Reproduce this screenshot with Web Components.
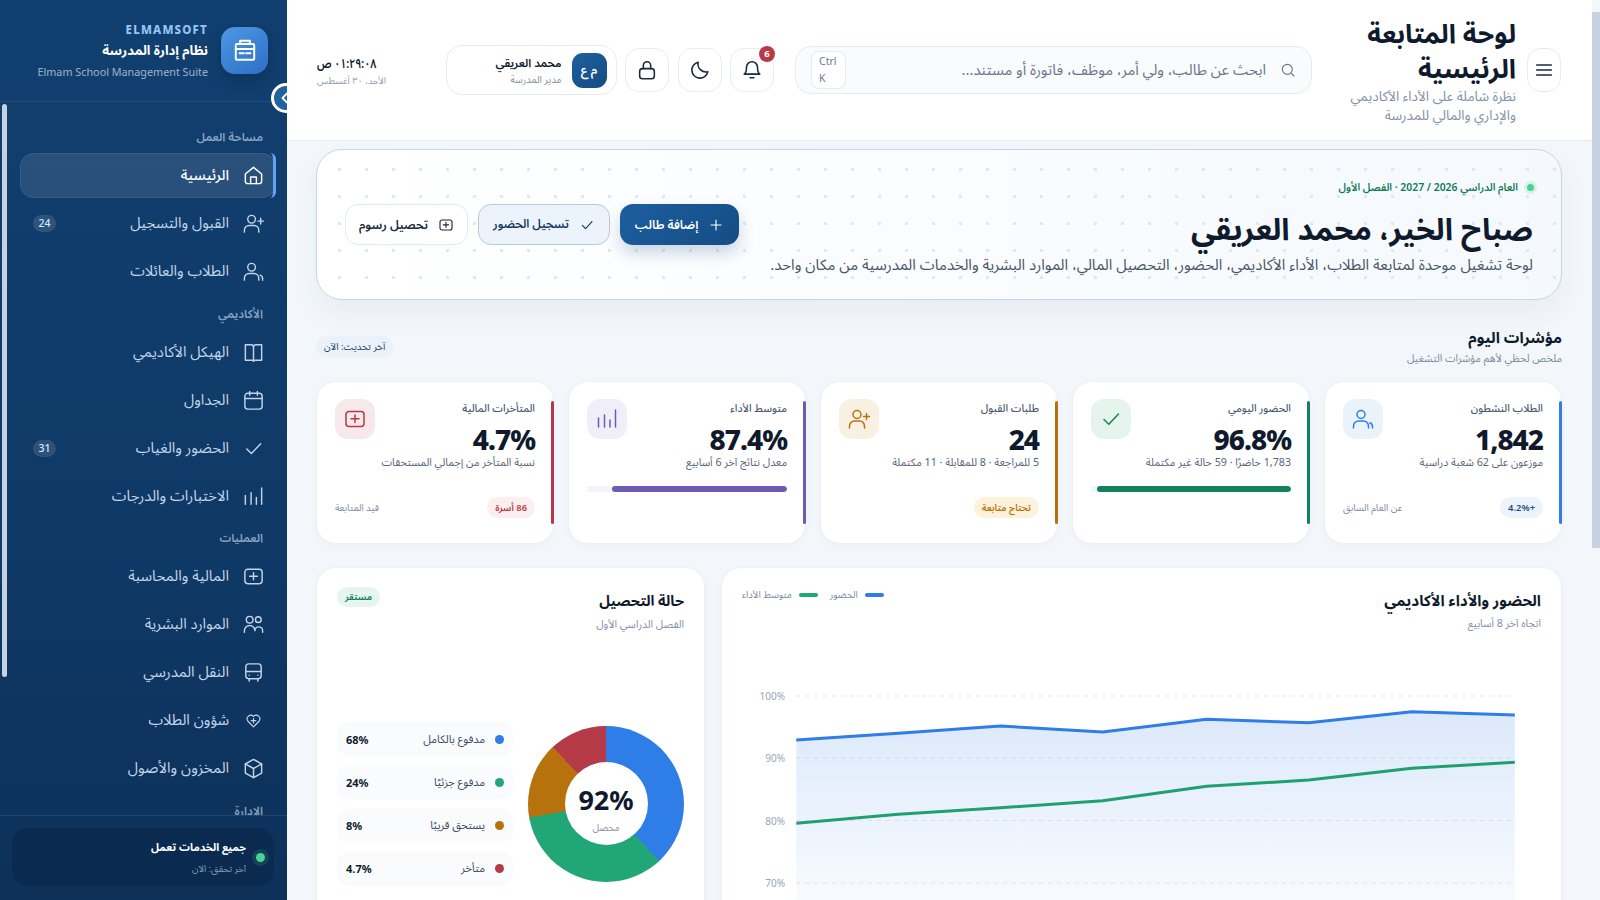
<!DOCTYPE html>
<html lang="ar">
<head>
<meta charset="utf-8">
<title>Elmam School</title>
<style>
  html, body { margin: 0; height: 100%; overflow: hidden; }
  body {
    font-family: "Noto Sans", "Noto Sans Arabic", "DejaVu Sans", sans-serif;
    color: #0f1b2d;
    background: #f3f7fb;
  }
  school-app { height: 900px; }
</style>
</head>
<body>
<school-app>
  <side-bar slot="side">
    <nav-label>مساحة العمل</nav-label>
    <nav-item icon="home" active>الرئيسية</nav-item>
    <nav-item icon="userplus" badge="24">القبول والتسجيل</nav-item>
    <nav-item icon="user">الطلاب والعائلات</nav-item>
    <nav-label>الأكاديمي</nav-label>
    <nav-item icon="book">الهيكل الأكاديمي</nav-item>
    <nav-item icon="calendar">الجداول</nav-item>
    <nav-item icon="check" badge="31">الحضور والغياب</nav-item>
    <nav-item icon="bars">الاختبارات والدرجات</nav-item>
    <nav-label>العمليات</nav-label>
    <nav-item icon="plusbox">المالية والمحاسبة</nav-item>
    <nav-item icon="people">الموارد البشرية</nav-item>
    <nav-item icon="bus">النقل المدرسي</nav-item>
    <nav-item icon="heart">شؤون الطلاب</nav-item>
    <nav-item icon="cube">المخزون والأصول</nav-item>
    <nav-label>الإدارة</nav-label>
  </side-bar>
  <top-bar slot="top"></top-bar>
  <hero-panel></hero-panel>
  <section-head></section-head>
  <kpi-grid>
    <kpi-card color="#2f7de6" tint="#eaf2fc" icon="user" label="الطلاب النشطون" value="1,842" sub="موزعون على 62 شعبة دراسية" badge="+4.2%" tone="blue" note="عن العام السابق"></kpi-card>
    <kpi-card color="#15815c" tint="#e6f4ee" icon="check" label="الحضور اليومي" value="96.8%" sub="1,783 حاضرًا · 59 حالة غير مكتملة" progress="96.8"></kpi-card>
    <kpi-card color="#b8720d" tint="#f8f0e3" icon="userplus" label="طلبات القبول" value="24" sub="5 للمراجعة · 8 للمقابلة · 11 مكتملة" badge="تحتاج متابعة" tone="amber"></kpi-card>
    <kpi-card color="#6b5bb5" tint="#f0eef8" icon="bars" label="متوسط الأداء" value="87.4%" sub="معدل نتائج آخر 6 أسابيع" progress="87.4"></kpi-card>
    <kpi-card color="#b53a47" tint="#f7e9eb" icon="plusbox" label="المتأخرات المالية" value="4.7%" sub="نسبة المتأخر من إجمالي المستحقات" badge="86 أسرة" tone="red" note="قيد المتابعة"></kpi-card>
  </kpi-grid>
  <chart-row>
    <line-chart></line-chart>
    <donut-chart></donut-chart>
  </chart-row>
</school-app>

<script>
const paths = {
  home: '<path d="M3.5 10.5 12 3.5l8.5 7V18a2.5 2.5 0 0 1-2.5 2.5H6A2.5 2.5 0 0 1 3.5 18z"/><path d="M9 20.5v-7h6v7"/>',
  userplus: '<circle cx="10" cy="7.5" r="4"/><path d="M2.5 21v-2a5 5 0 0 1 5-5h5a5 5 0 0 1 5 5v2"/><path d="M19.5 6.5v6M16.5 9.5h6"/>',
  user: '<circle cx="10" cy="7.5" r="4"/><path d="M2.5 21v-2a5 5 0 0 1 5-5h5a5 5 0 0 1 5 5v2"/><path d="M21.5 21v-1.5a4 4 0 0 0-2.5-3.7"/>',
  book: '<path d="M3.5 4h6A2.5 2.5 0 0 1 12 6a2.5 2.5 0 0 1 2.5-2h6v16H14a2 2 0 0 0-2 1 2 2 0 0 0-2-1H3.5z"/><path d="M12 6v15"/>',
  calendar: '<rect x="3" y="4.5" width="18" height="16.5" rx="3"/><path d="M3 10h18M8 2.5v4M16 2.5v4"/>',
  check: '<path d="M5 12.5l4.8 4.8L19.5 7"/>',
  bars: '<path d="M3.5 11v9M9.5 8v12M15 13v7M20.5 3v17"/>',
  plusbox: '<rect x="3" y="4.5" width="18" height="15" rx="3"/><path d="M12 8v7.5M8 11.8h8"/>',
  people: '<circle cx="8" cy="7" r="3.5"/><circle cx="17" cy="7" r="3"/><path d="M2.5 20v-1.5a5.5 5.5 0 0 1 11 0c0-2.5 1.5-4 4-4s4 1.5 4 4V20"/>',
  bus: '<rect x="4" y="3" width="16" height="15.5" rx="3"/><path d="M4 11h16M7.5 18.500V21M16.500 18.500V21M7.500 14.800h.01M16.500 14.800h.01"/>',
  heart: '<g transform="translate(2.4 2.2) scale(.8)"><path d="M12 20.5 4.800 13.200a4.800 4.800 0 0 1 6.700-6.800l.5.500.5-.5a4.800 4.800 0 0 1 6.700 6.800z"/><path d="M12 9.5v6M9 12.500h6"/></g>',
  cube: '<path d="M12 2.500 20.500 7.300v9.400L12 21.500l-8.500-4.800V7.300z"/><path d="M3.500 7.300 12 12l8.500-4.700M12 12v9.500"/>',
  logo: '<rect x="3.5" y="6.5" width="17" height="14.5" rx="1"/><path d="M7.500 6.500v-3h9v3M3.500 11h17M7 15h4M13 15h4"/>',
  bell: '<path d="M6 9a6 6 0 0 1 12 0c0 6 2.500 7.500 2.500 7.500h-17S6 15 6 9z"/><path d="M10 20.500h4"/>',
  moon: '<path d="M20.500 14A8.800 8.800 0 0 1 10 3.500 8.800 8.800 0 1 0 20.500 14z"/>',
  lock: '<rect x="4" y="10.5" width="16" height="11" rx="3"/><path d="M8 10.500V7a4 4 0 0 1 8 0v3.500"/>',
  menu: '<path d="M4 6.500h16M4 12h16M4 17.500h16"/>',
  search: '<circle cx="11" cy="11" r="7.5"/><path d="M17 17l4 4"/>',
  plus: '<path d="M12 4.500v15M4.500 12h15"/>'
};

class UiIcon extends HTMLElement {
  connectedCallback() {
    const size = this.getAttribute("size") || 20;
    const weight = this.getAttribute("weight") || 1.7;
    this.attachShadow({mode: "open"}).innerHTML = `
      <style>:host { display: inline-flex; flex: none; width: ${size}px; height: ${size}px; } svg { width: 100%; height: 100%; }</style>
      <svg viewBox="0 0 24 24" fill="none" stroke="currentColor" stroke-width="${weight}" stroke-linecap="round" stroke-linejoin="round">${paths[this.getAttribute("name")]}</svg>`;
  }
}
customElements.define("ui-icon", UiIcon);

const appTemplate = document.createElement("template");
appTemplate.innerHTML = `
  <style>
    :host { display: flex; direction: ltr; width: 1600px; overflow: hidden; }
    .main { flex: 1; min-width: 0; direction: rtl; display: flex; flex-direction: column; height: 900px; overflow: hidden; }
    .content { padding: 8px 30px 0 29px; }
    .rail { flex: none; width: 8px; background: #f3f6fa; padding-top: 12px; box-sizing: border-box; }
    .rail div { height: 536px; background: #c6d2e2; }
  </style>
  <slot name="side"></slot>
  <div class="main">
    <slot name="top"></slot>
    <div class="content"><slot></slot></div>
  </div>
  <div class="rail"><div></div></div>
`;
class SchoolApp extends HTMLElement {
  constructor() {
    super();
    this.attachShadow({mode: "open"}).appendChild(appTemplate.content.cloneNode(true));
  }
}
customElements.define("school-app", SchoolApp);

const sideTemplate = document.createElement("template");
sideTemplate.innerHTML = `
  <style>
    :host { display: flex; flex-direction: column; flex: none; width: 287px; height: 900px; position: relative; overflow: hidden; direction: rtl;
      background: linear-gradient(180deg, #113f6f 0%, #0f3a68 55%, #0d3159 100%); color: #fff; }
    .head { height: 102px; flex: none; box-sizing: border-box; display: flex; align-items: center; gap: 13px; padding: 0 19px 0 0; border-bottom: 1px solid rgba(255,255,255,.07); }
    .logo { width: 47px; height: 47px; margin-top: -1px; border-radius: 14px; background: linear-gradient(145deg, #4f97e6, #2c70c4); display: flex; align-items: center; justify-content: center; color: #fff; box-shadow: 0 6px 14px rgba(6,25,55,.3); }
    .brand { display: flex; flex-direction: column; padding-top: 2px; }
    .en { font-size: 11.5px; font-weight: 800; letter-spacing: 1.2px; color: #93c5f5; line-height: 17px; }
    .name { font-size: 13.2px; font-weight: 700; line-height: 24px; }
    .suite { font-size: 10.8px; color: rgba(225,235,247,.68); line-height: 20px; direction: ltr; text-align: right; }
    .toggle { position: absolute; left: 271px; top: 83px; width: 30px; height: 30px; box-sizing: border-box; border-radius: 50%; border: 3px solid #fff; background: #20639f; color: #fff; display: flex; align-items: center; direction: ltr; padding-left: 6px; z-index: 2; }
    .nav { flex: 1; min-height: 0; overflow: hidden; padding: 15.5px 11px 0 20px; }
    .thumb { position: absolute; left: 2px; top: 104px; width: 5px; height: 573px; border-radius: 3px; background: #c6d2e2; }
    .foot { flex: none; height: 85px; box-sizing: border-box; border-top: 1px solid rgba(255,255,255,.09); padding: 12px 13px 0 12px; }
    .status { height: 58px; border-radius: 16px; background: rgba(7,28,58,.32); display: flex; align-items: center; gap: 10px; padding-right: 7px; }
    .dot { width: 9px; height: 9px; border-radius: 50%; background: #4ad195; box-shadow: 0 0 0 4px rgba(74,209,149,.14); margin-right: 2px; }
    .t { font-size: 10.8px; font-weight: 700; line-height: 22px; }
    .s { font-size: 9.4px; color: rgba(215,226,240,.6); line-height: 21px; }
  </style>
  <div class="head">
    <div class="logo"><ui-icon name="logo" size="26" weight="1.8"></ui-icon></div>
    <div class="brand">
      <span class="en" dir="ltr" style="text-align:right">ELMAMSOFT</span>
      <span class="name">نظام إدارة المدرسة</span>
      <span class="suite">Elmam School Management Suite</span>
    </div>
  </div>
  <div class="toggle"><svg width="10" height="12" viewBox="0 0 10 12" fill="none" stroke="#fff" stroke-width="1.8" stroke-linecap="round" stroke-linejoin="round"><path d="M7 1.5 2.5 6 7 10.5"/></svg></div>
  <div class="thumb"></div>
  <div class="nav"><slot></slot></div>
  <div class="foot">
    <div class="status">
      <span class="dot"></span>
      <div><div class="t">جميع الخدمات تعمل</div><div class="s">آخر تحقق: الآن</div></div>
    </div>
  </div>
`;
class SideBar extends HTMLElement {
  constructor() {
    super();
    this.attachShadow({mode: "open"}).appendChild(sideTemplate.content.cloneNode(true));
  }
}
customElements.define("side-bar", SideBar);

class NavLabel extends HTMLElement {
  constructor() {
    super();
    this.attachShadow({mode: "open"}).innerHTML = `
      <style>:host { display: block; height: 16px; line-height: 16px; margin: 10.5px 0 9px; padding-right: 13px; font-size: 11.7px; font-weight: 600; color: rgba(195,213,235,.68); }</style>
      <slot></slot>`;
  }
}
customElements.define("nav-label", NavLabel);

class NavItem extends HTMLElement {
  constructor() {
    super();
    const badge = this.getAttribute("badge");
    this.attachShadow({mode: "open"}).innerHTML = `
      <style>
        :host { display: flex; align-items: center; gap: 12.5px; height: 45px; box-sizing: border-box; margin-bottom: 3px; padding: 0 11.5px 0 13px; border-radius: 14px; font-size: 14.8px; color: #c3d4e8; position: relative; }
        :host([active]) { background: rgba(255,255,255,.1); box-shadow: inset 0 0 0 1px rgba(255,255,255,.07); color: #fff; font-size: 14.4px; font-weight: 500; }
        :host([active])::after { content: ""; position: absolute; right: 0; top: 0; bottom: 0; width: 12px; border-right: 3px solid #62a5ee; border-radius: 14px; box-sizing: border-box; }
        .badge { margin-right: auto; min-width: 23px; height: 17px; line-height: 17px; border-radius: 9px; background: rgba(255,255,255,.12); font-size: 10.5px; text-align: center; color: #dbe7f4; font-weight: 500; }
      </style>
      <ui-icon name="${this.getAttribute("icon")}" size="23" weight="1.5"></ui-icon>
      <span><slot></slot></span>
      ${badge ? `<span class="badge">${badge}</span>` : ""}`;
  }
}
customElements.define("nav-item", NavItem);

class IconButton extends HTMLElement {
  constructor() {
    super();
    const badge = this.getAttribute("badge");
    this.attachShadow({mode: "open"}).innerHTML = `
      <style>
        :host { display: flex; align-items: center; justify-content: center; flex: none; width: 44px; height: 44px; box-sizing: border-box; background: #fff; border: 1px solid #e7ecf3; border-radius: 14px; color: #1a2a3f; position: relative; }
        .badge { position: absolute; top: -3px; left: 28px; width: 16px; height: 16px; border-radius: 50%; background: #b83a45; color: #fff; font-size: 9.5px; font-weight: 700; line-height: 16px; text-align: center; }
      </style>
      <ui-icon name="${this.getAttribute("icon")}" size="22" weight="1.7"></ui-icon>
      ${badge ? `<span class="badge">${badge}</span>` : ""}`;
  }
}
customElements.define("icon-button", IconButton);

const topTemplate = document.createElement("template");
topTemplate.innerHTML = `
  <style>
    :host { display: flex; align-items: center; flex: none; height: 141px; box-sizing: border-box; padding: 0 31px 0 30px; background: #fff; border-bottom: 1px solid #e6ecf3; }
    .menu { width: 34px; margin-left: 11px; }
    .titles { flex: none; width: 166px; margin-left: 38px; }
    h1 { margin: 0; font-size: 26.5px; line-height: 35px; font-weight: 700; color: #0f1b2d; }
    p { margin: 1px 0 0; font-size: 13.5px; line-height: 19px; color: #8391a5; margin-left: -6px; }
    .search { flex: none; width: 517px; height: 48px; box-sizing: border-box; display: flex; align-items: center; gap: 14px; padding: 0 15px; margin-left: 21px; background: #f9fbfd; border: 1px solid #e6ebf2; border-radius: 16px; color: #68778b; font-size: 14.8px; }
    .search span:nth-of-type(1) { white-space: nowrap; }
    .kbd { margin-right: auto; width: 35px; height: 38px; box-sizing: border-box; padding: 1px 7px; background: #fff; border: 1px solid #e6ebf2; border-radius: 8px; font-size: 10.5px; line-height: 17px; color: #6b7a8e; direction: ltr; text-align: left; }
    .acts { display: flex; gap: 8.5px; align-items: center; }
    .chip { width: 171px; height: 50px; box-sizing: border-box; display: flex; align-items: center; gap: 10px; padding: 0 9px; background: #fff; border: 1px solid #e7ecf3; border-radius: 16px; }
    .ava { width: 35px; height: 35px; border-radius: 11px; background: linear-gradient(145deg, #1d5f9d, #154c84); color: #fff; display: flex; align-items: center; justify-content: center; font-size: 12.5px; font-weight: 600; letter-spacing: 1px; flex: none; }
    .nm { font-size: 11.5px; font-weight: 600; line-height: 18px; }
    .rl { font-size: 9.8px; color: #8391a5; line-height: 15px; }
    .clock { margin-right: auto; text-align: left; }
    .tm { font-size: 13px; font-weight: 600; line-height: 20px; transform: scaleX(.81); transform-origin: left center; }
    .dt { font-size: 9.2px; color: #8f9cae; line-height: 15px; }
  </style>
  <icon-button class="menu" icon="menu"></icon-button>
  <div class="titles">
    <h1>لوحة المتابعة الرئيسية</h1>
    <p>نظرة شاملة على الأداء الأكاديمي والإداري والمالي للمدرسة</p>
  </div>
  <div class="search">
    <ui-icon name="search" size="16"></ui-icon>
    <span>ابحث عن طالب، ولي أمر، موظف، فاتورة أو مستند...</span>
    <span class="kbd">Ctrl K</span>
  </div>
  <div class="acts">
    <icon-button icon="bell" badge="6"></icon-button>
    <icon-button icon="moon"></icon-button>
    <icon-button icon="lock"></icon-button>
    <div class="chip">
      <span class="ava">م ع</span>
      <div><div class="nm">محمد العريقي</div><div class="rl">مدير المدرسة</div></div>
    </div>
  </div>
  <div class="clock">
    <div class="tm">٠١:٢٩:٠٨ ص</div>
    <div class="dt">الأحد، ٣٠ أغسطس</div>
  </div>
`;
class TopBar extends HTMLElement {
  constructor() {
    super();
    this.attachShadow({mode: "open"}).appendChild(topTemplate.content.cloneNode(true));
  }
}
customElements.define("top-bar", TopBar);

const heroTemplate = document.createElement("template");
heroTemplate.innerHTML = `
  <style>
    :host { display: flex; align-items: center; justify-content: space-between; height: 151px; box-sizing: border-box; padding: 0 28px; border: 1px solid #c9d5e5; border-radius: 26px;
      background: radial-gradient(circle, #dfe7f1 1.4px, transparent 1.8px) 9px 6px / 27px 27px, linear-gradient(90deg, #fff 0%, #f5f9fd 100%);
      box-shadow: 0 14px 28px rgba(30,60,100,.05); }
    .txt { padding-top: 5px; }
    .tag { display: flex; align-items: center; gap: 9px; font-size: 10.4px; font-weight: 600; color: #0f7b57; line-height: 16px; margin-right: -1px; }
    .tag i { width: 7px; height: 7px; border-radius: 50%; background: #4ad195; box-shadow: 0 0 0 3px rgba(74,209,149,.18); }
    h2 { margin: 9.5px 0 2.5px; font-size: 30.5px; line-height: 46px; font-weight: 700; color: #0f1b2d; }
    p { margin: 0; font-size: 15px; line-height: 22px; color: #475669; white-space: nowrap; }
    .btns { display: flex; gap: 10px; }
    .btn { height: 41px; box-sizing: border-box; display: flex; align-items: center; justify-content: center; gap: 10px; border-radius: 13px; font-size: 12.2px; font-weight: 600; border: 1px solid #e3e9f1; background: #fff; color: #1a2a3f; }
    .p { width: 119px; background: linear-gradient(135deg, #1c5f9f, #154c84); color: #fff; border: 0; box-shadow: 0 8px 16px rgba(21,76,132,.22); }
    .s { width: 132px; background: #edf3fb; border-color: #b9c8dc; color: #173a63; font-size: 11.8px; }
    .t { width: 123px; }
  </style>
  <div class="txt">
    <div class="tag"><i></i><span>العام الدراسي 2026 / 2027 · الفصل الأول</span></div>
    <h2>صباح الخير، محمد العريقي</h2>
    <p>لوحة تشغيل موحدة لمتابعة الطلاب، الأداء الأكاديمي، الحضور، التحصيل المالي، الموارد البشرية والخدمات المدرسية من مكان واحد.</p>
  </div>
  <div class="btns">
    <div class="btn p"><ui-icon name="plus" size="16"></ui-icon>إضافة طالب</div>
    <div class="btn s"><ui-icon name="check" size="16"></ui-icon>تسجيل الحضور</div>
    <div class="btn t"><ui-icon name="plusbox" size="16"></ui-icon>تحصيل رسوم</div>
  </div>
`;
class HeroPanel extends HTMLElement {
  constructor() {
    super();
    this.attachShadow({mode: "open"}).appendChild(heroTemplate.content.cloneNode(true));
  }
}
customElements.define("hero-panel", HeroPanel);

class SectionHead extends HTMLElement {
  constructor() {
    super();
    this.attachShadow({mode: "open"}).innerHTML = `
      <style>
        :host { display: flex; align-items: center; justify-content: space-between; height: 44px; margin: 24px 0 13px; }
        h3 { margin: 0; font-size: 15.4px; line-height: 25px; font-weight: 700; }
        p { margin: 0; font-size: 10.6px; line-height: 17px; color: #7d8b9e; }
        .up { height: 21px; line-height: 21px; padding: 0 8px; border-radius: 11px; background: #eaf1f9; font-size: 9.6px; color: #24405f; }
      </style>
      <div><h3>مؤشرات اليوم</h3><p>ملخص لحظي لأهم مؤشرات التشغيل</p></div>
      <span class="up">آخر تحديث: الآن</span>`;
  }
}
customElements.define("section-head", SectionHead);

class KpiGrid extends HTMLElement {
  constructor() {
    super();
    this.attachShadow({mode: "open"}).innerHTML = `
      <style>:host { display: grid; grid-template-columns: repeat(5, minmax(0, 1fr)); gap: 14px; }</style>
      <slot></slot>`;
  }
}
customElements.define("kpi-grid", KpiGrid);

const tones = {
  blue: ["#edf3fb", "#1d4f86"],
  amber: ["#fdf3dd", "#b8720d"],
  red: ["#fdeef0", "#b53a47"],
  green: ["#e6f5ef", "#0f7b57"]
};

class KpiCard extends HTMLElement {
  connectedCallback() {
    const a = (n) => this.getAttribute(n);
    const color = a("color");
    let bottom = "";
    if (a("progress")) {
      bottom = `<div class="track"><div class="fill" style="width:${a("progress")}%"></div></div>`;
    } else {
      const tone = tones[a("tone")];
      bottom = `<div class="foot"><span class="pill" style="background:${tone[0]};color:${tone[1]}">${a("badge")}</span><span class="note">${a("note") || ""}</span></div>`;
    }
    this.attachShadow({mode: "open"}).innerHTML = `
      <style>
        :host { display: block; height: 163px; box-sizing: border-box; padding: 18px; background: #fff; border: 1px solid #edf1f6; border-radius: 20px; position: relative; box-shadow: 0 2px 6px rgba(30,60,100,.03); }
        :host::after { content: ""; position: absolute; right: -1px; top: 19px; bottom: 19px; width: 3.5px; border-radius: 2px; background: ${color}; }
        .row { display: flex; justify-content: space-between; align-items: flex-start; height: 56px; margin-top: -1px; }
        .lb { font-size: 10.6px; line-height: 16px; padding-top: 1px; color: #4b5a6e; font-weight: 500; }
        .val { font-size: 28px; font-weight: 800; letter-spacing: -1px; line-height: 30px; margin-top: 8px; color: #0f1b2d; }
        .sub { font-size: 10.7px; line-height: 14px; color: #56657a; white-space: nowrap; }
        .ic { width: 40px; height: 40px; border-radius: 13px; background: ${a("tint")}; color: ${color}; display: flex; align-items: center; justify-content: center; }
        .track { margin-top: 17px; height: 6px; border-radius: 3px; background: #f1f4f8; overflow: hidden; }
        .fill { height: 100%; border-radius: 3px; background: ${color}; }
        .foot { margin-top: 28px; display: flex; justify-content: space-between; align-items: center; }
        .pill { height: 21px; line-height: 21px; padding: 0 8px; border-radius: 11px; font-size: 9.4px; font-weight: 600; }
        .note { font-size: 9.5px; color: #7d8b9e; }
      </style>
      <div class="row">
        <div>
          <div class="lb">${a("label")}</div>
          <div class="val">${a("value")}</div>
        </div>
        <div class="ic"><ui-icon name="${a("icon")}" size="24" weight="1.5"></ui-icon></div>
      </div>
      <div class="sub">${a("sub")}</div>
      ${bottom}`;
  }
}
customElements.define("kpi-card", KpiCard);

class ChartRow extends HTMLElement {
  constructor() {
    super();
    this.attachShadow({mode: "open"}).innerHTML = `
      <style>:host { display: grid; grid-template-columns: minmax(0, 1fr) 389px; gap: 16px; margin-top: 23px; }</style>
      <slot></slot>`;
  }
}
customElements.define("chart-row", ChartRow);

const cardStyle = `
  :host { display: block; height: 400px; box-sizing: border-box; padding: 19px 20px 20px; background: #fff; border: 1px solid #edf1f6; border-radius: 20px; box-shadow: 0 2px 6px rgba(30,60,100,.03); }
  .hd { display: flex; justify-content: space-between; align-items: flex-start; height: 46px; }
  h4 { margin: 0; font-size: 15.2px; line-height: 26px; font-weight: 700; color: #0f1b2d; }
  .sb { font-size: 10.6px; line-height: 20px; color: #8391a5; }
`;

const lineTemplate = document.createElement("template");
const blueLine = "16.3,60 118.4,53.3 220.6,46 322.7,52 426.6,39.3 528.7,42.7 632,31.7 734.8,35";
const greenLine = "16.3,143.3 118.4,134.3 220.6,127.7 322.7,120.7 426.6,106.3 528.7,100 632,88.3 734.8,82.3";
lineTemplate.innerHTML = `
  <style>${cardStyle}
    .lg { display: flex; gap: 12px; font-size: 9.6px; color: #7d8b9e; margin-top: -2px; direction: rtl; }
    .lg span { display: flex; align-items: center; gap: 7px; }
    .lg i { width: 19px; height: 4px; border-radius: 2px; }
    svg { display: block; margin-top: 47px; overflow: visible; }
    text { font-size: 10px; fill: #9aa6b6; font-family: inherit; }
  </style>
  <div class="hd">
    <div><h4>الحضور والأداء الأكاديمي</h4><div class="sb">اتجاه آخر 8 أسابيع</div></div>
    <div class="lg"><span><i style="background:#2f7de6"></i>الحضور</span><span><i style="background:#21a677"></i>متوسط الأداء</span></div>
  </div>
  <svg width="799" height="270" viewBox="0 0 799 270" direction="ltr">
    <defs><linearGradient id="area" x1="0" y1="0" x2="0" y2="1">
      <stop offset="0" stop-color="#2f7de6" stop-opacity=".17"/><stop offset="1" stop-color="#2f7de6" stop-opacity="0"/>
    </linearGradient></defs>
    <g stroke="#e3e8ef" stroke-width="1" stroke-dasharray="4 5">
      <path d="M54 16H771M54 78H771M54 140.5H771M54 203H771"/>
    </g>
    <g text-anchor="end">
      <text x="43" y="20">100%</text><text x="43" y="82">90%</text><text x="43" y="144.5">80%</text><text x="43" y="207">70%</text>
    </g>
    <polygon points="${blueLine} 734.8,270 16.3,270" fill="url(#area)" transform="translate(38 0)"/>
    <polyline points="${blueLine}" transform="translate(38 0)" fill="none" stroke="#2f7de6" stroke-width="3" stroke-linejoin="round"/>
    <polyline points="${greenLine}" transform="translate(38 0)" fill="none" stroke="#21a06f" stroke-width="3" stroke-linejoin="round"/>
  </svg>
`;
class LineChart extends HTMLElement {
  constructor() {
    super();
    this.attachShadow({mode: "open"}).appendChild(lineTemplate.content.cloneNode(true));
  }
}
customElements.define("line-chart", LineChart);

const donutTemplate = document.createElement("template");
donutTemplate.innerHTML = `
  <style>${cardStyle}
    h4 { font-size: 14.4px; margin-top: 1px; }
    .ok { height: 20px; line-height: 20px; padding: 0 8px; border-radius: 10px; background: #e6f5ef; color: #0f7b57; font-size: 9.5px; font-weight: 600; }
    .bd { display: flex; gap: 15px; align-items: center; margin-top: 89px; }
    .ring { flex: none; width: 156px; height: 156px; border-radius: 50%; display: flex; align-items: center; justify-content: center;
      background: conic-gradient(#2f7de6 0 137deg, #21a677 137deg 260deg, #b8720d 260deg 317deg, #b53a47 317deg 360deg); }
    .hole { width: 83px; height: 83px; border-radius: 50%; background: #fff; display: flex; flex-direction: column; align-items: center; justify-content: center; }
    .big { font-size: 27px; font-weight: 700; line-height: 32px; margin-top: 12px; }
    .cap { font-size: 9.5px; color: #8391a5; line-height: 16px; margin-top: 4px; }
    .lgd { flex: 1; display: flex; flex-direction: column; gap: 9.3px; }
    .it { height: 34px; display: flex; align-items: center; gap: 10px; padding: 0 9px; border-radius: 12px; background: #f9fbfd; font-size: 11px; color: #3c4a5d; }
    .it i { width: 9px; height: 9px; border-radius: 50%; }
    .it b { margin-right: auto; color: #0f1b2d; font-weight: 700; }
  </style>
  <div class="hd">
    <div><h4>حالة التحصيل</h4><div class="sb">الفصل الدراسي الأول</div></div>
    <span class="ok">مستقر</span>
  </div>
  <div class="bd">
    <div class="ring"><div class="hole"><div class="big">92%</div><div class="cap">محصل</div></div></div>
    <div class="lgd">
      <div class="it"><i style="background:#2f7de6"></i>مدفوع بالكامل<b>68%</b></div>
      <div class="it"><i style="background:#21a677"></i>مدفوع جزئيًا<b>24%</b></div>
      <div class="it"><i style="background:#b8720d"></i>يستحق قريبًا<b>8%</b></div>
      <div class="it"><i style="background:#b53a47"></i>متأخر<b>4.7%</b></div>
    </div>
  </div>
`;
class DonutChart extends HTMLElement {
  constructor() {
    super();
    this.attachShadow({mode: "open"}).appendChild(donutTemplate.content.cloneNode(true));
  }
}
customElements.define("donut-chart", DonutChart);
</script>
</body>
</html>
